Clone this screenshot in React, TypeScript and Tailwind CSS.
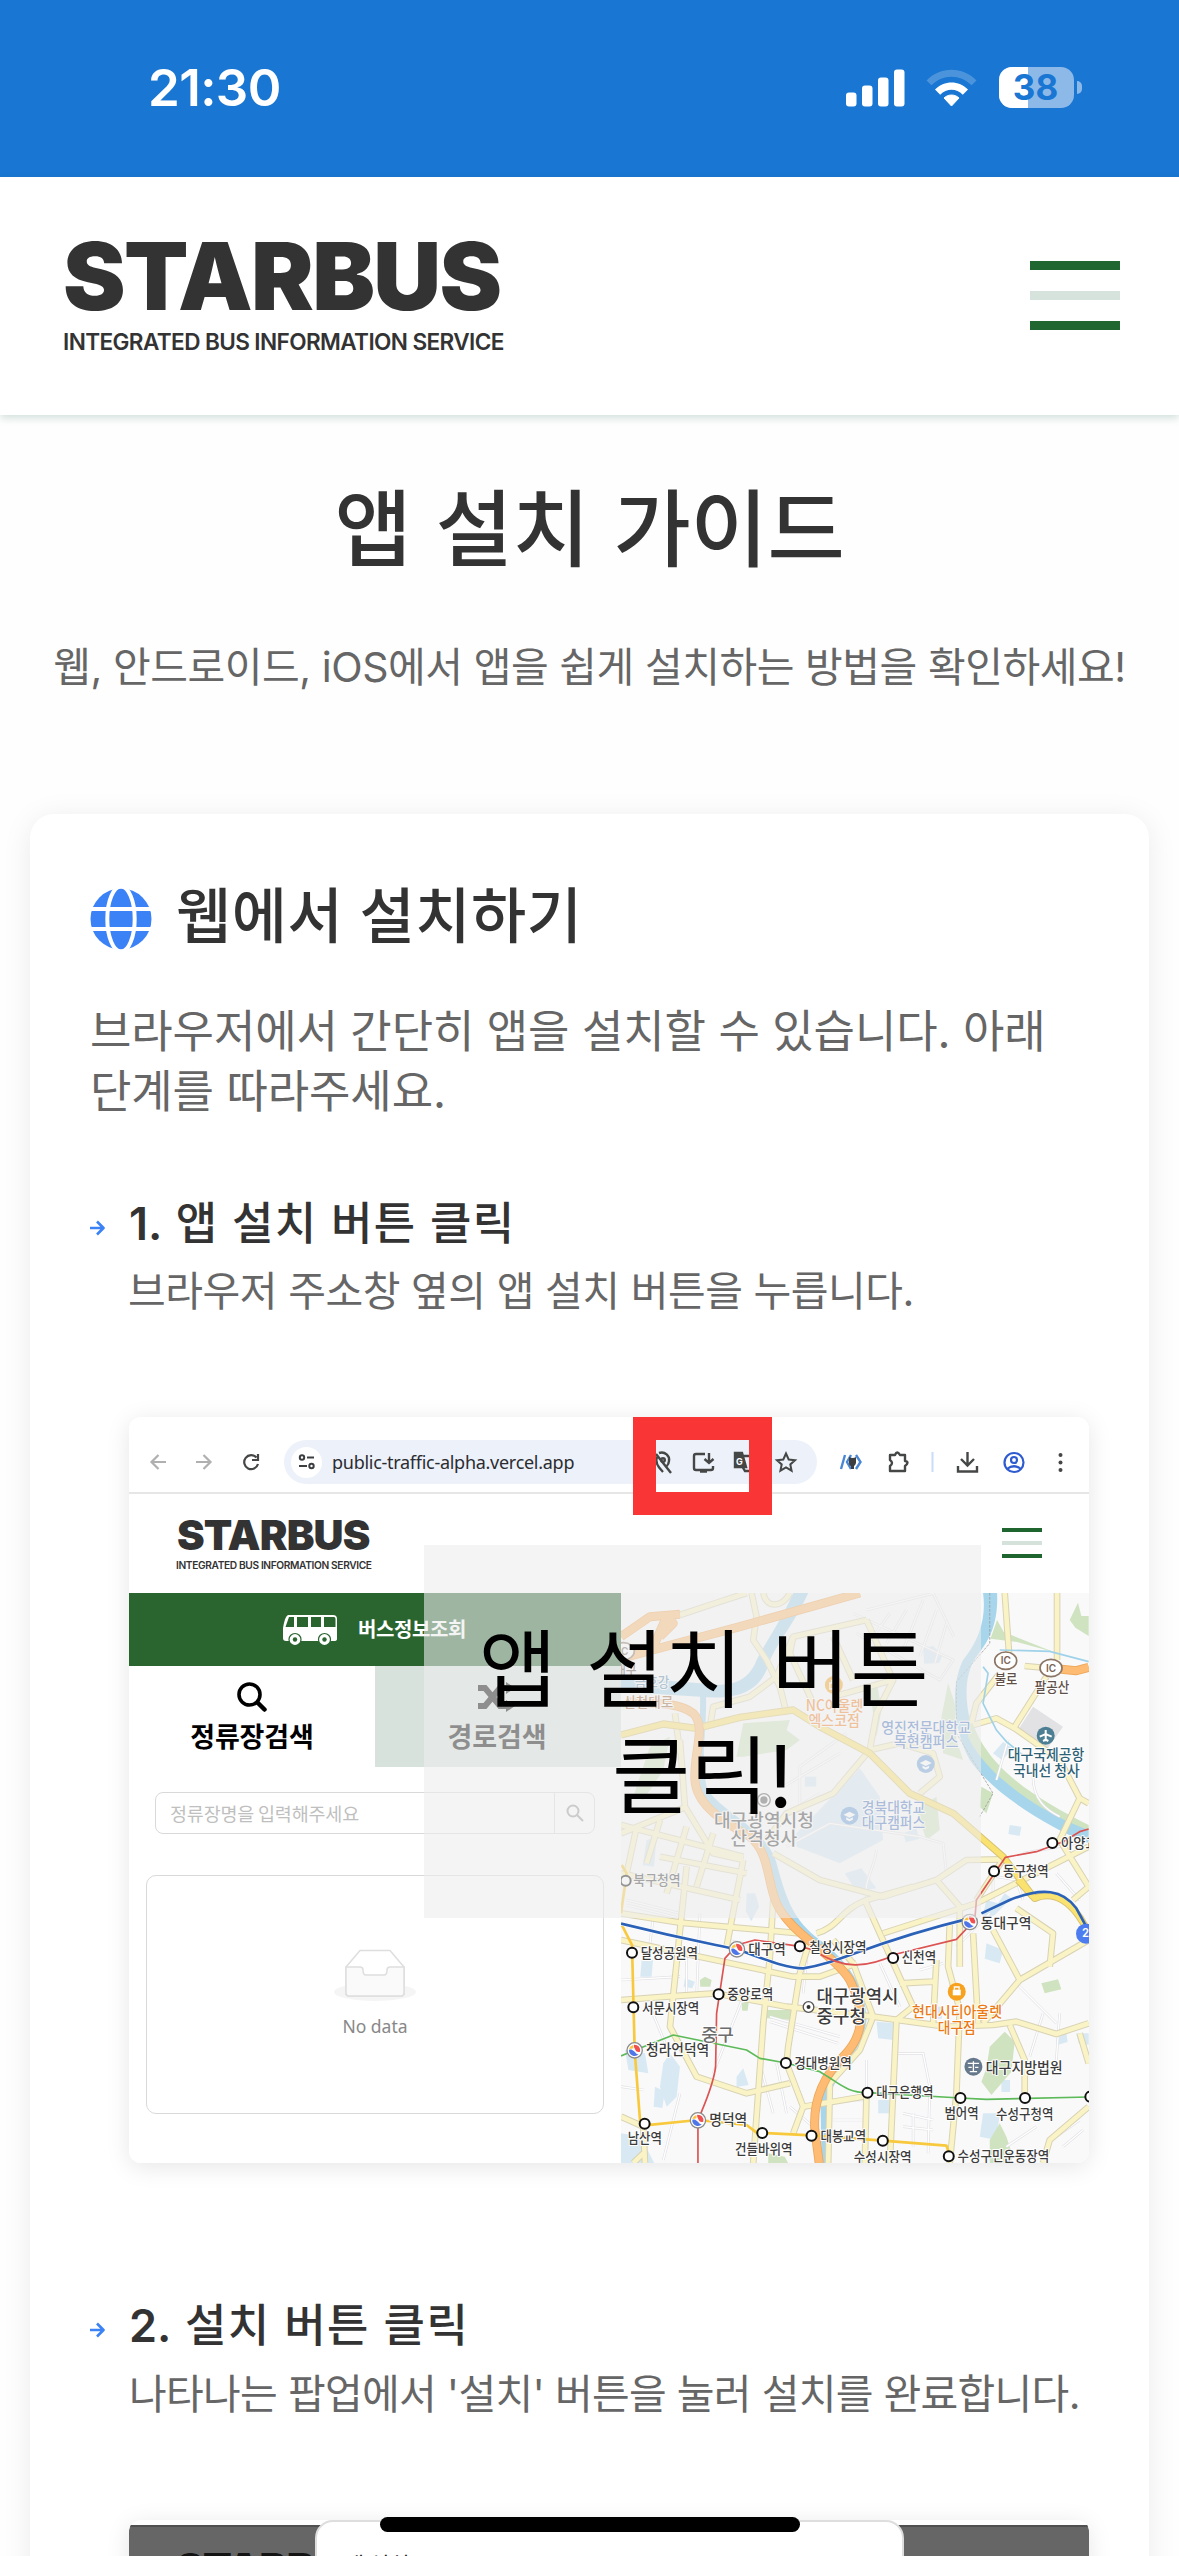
import React from "react";

const KR = "font-['Inter','Noto_Sans_CJK_KR',sans-serif]";
const MAP_FONT = "'Noto Sans CJK KR', sans-serif";

const water = [
  "M580 39 C540 130 500 180 470 240 C440 320 370 320 300 310 L63 290 L63 335 L300 350 C400 360 470 340 500 270 C520 200 580 140 625 39 Z",
  "M1150 39 L1192 39 C1196 130 1170 180 1130 230 C1080 300 1100 420 1140 500 C1200 590 1320 660 1467 750 L1467 790 C1340 740 1180 640 1110 540 C1060 450 1050 320 1090 240 C1140 180 1160 110 1150 39 Z",
  "M300 340 L318 340 C322 460 300 520 320 620 C350 690 500 740 530 850 C560 960 580 1020 660 1080 C740 1140 800 1220 800 1320 C790 1420 690 1490 682 1580 L682 1749 L665 1749 L662 1570 C680 1460 770 1400 780 1310 C780 1230 720 1160 640 1100 C560 1040 530 950 512 860 C480 760 330 720 300 620 C280 520 304 460 300 340 Z",
];

const lots = [
  "M970 205 l30 -8 l28 30 l-10 22 l-45 2 Z",
  "M780 565 L840 650 L850 780 L720 850 L590 800 L590 760 Z",
  "M615 590 h34 v30 h-34 Z",
  "M1230 735 l35 5 l-5 28 l-34 -6 Z",
  "M1180 520 l30 -34 l30 20 l-34 34 Z",
  "M910 760 l40 -15 l8 32 l-40 10 Z",
  "M735 880 l50 -15 l45 60 l-60 10 Z",
  "M140 780 l30 -10 l-8 90 l-34 -4 Z",
  "M440 940 l26 0 l12 40 l-24 44 l-16 -30 Z",
  "M1160 960 l35 10 l20 -30 l20 15 l-50 50 l-40 20 Z",
  "M125 1140 l34 0 l-4 50 l-34 0 Z",
  "M255 1195 l30 10 l-8 20 l-26 -5 Z",
  "M190 1450 l20 -30 l30 40 l-10 90 l-30 30 l-20 -60 Z",
  "M410 1490 l20 -25 l16 50 l-36 6 Z",
  "M75 1410 l60 10 l10 60 l-60 -10 Z",
  "M165 1520 l30 14 l-8 50 l-26 -4 Z",
  "M63 1660 l60 10 l40 80 l-100 0 Z",
  "M835 1560 h34 v40 h-34 Z",
  "M1150 1600 l50 0 l-10 80 l-50 -10 Z",
  "M1370 1375 l30 -15 l4 26 l-34 10 Z",
  "M1000 1280 l30 0 l-4 36 l-30 0 Z",
  "M830 1325 l55 5 l-5 50 l-45 -5 Z",
  "M1160 1090 l50 20 l-10 40 l-45 -14 Z",
  "M1430 1360 l37 0 l0 34 l-30 -4 Z",
  "M1205 1500 h26 v36 h-26 Z",
];

const greens = [
  "M1410 120 l25 -52 l10 40 l22 0 v60 l-40 -25 Z",
  "M1192 120 l20 36 l150 60 l-110 -30 l-80 -10 Z",
  "M410 530 L430 430 L570 420 L560 450 L600 480 L560 510 L430 530 Z",
  "M1025 410 l20 -100 l20 60 l5 110 l20 60 l-60 -20 Z",
  "M1110 400 C1150 560 1300 650 1467 735 L1467 750 C1300 690 1150 570 1105 470 Z",
  "M1145 620 l35 20 l-20 60 l-20 -20 Z",
  "M150 500 l60 -30 l-20 100 l-60 90 l-30 -10 Z",
  "M950 690 l60 -40 l10 100 l-40 30 Z",
  "M830 470 l-20 -140 l20 -30 l15 90 Z",
  "M300 1200 l15 -10 l20 10 l-4 20 l-30 0 Z",
  "M1325 1210 l50 -12 l10 30 l-50 12 Z",
  "M495 1290 l90 0 l-10 30 l-80 -6 Z",
  "M1170 1400 l45 -45 l30 30 l-10 90 l-60 70 l-30 -40 l15 -40 Z",
  "M1170 1680 l30 -50 l20 40 l20 60 l-10 20 l-60 0 Z",
  "M505 1720 l50 10 l10 20 l-60 0 Z",
  "M425 1270 l22 -8 l-4 30 l-16 0 Z",
];

const thin = [
  "M760 100 L1060 240 L1020 300 L770 160",
  "M800 90 L1000 40 L1062 170",
  "M820 170 L870 100 M860 190 L920 90 M910 210 L970 60 M960 230 L1010 90 M1005 250 L1040 130",
  "M600 560 L600 680 M550 620 L720 520 M600 560 L740 460 M560 700 L660 640",
  "M560 800 L690 730 L960 770 L1030 790 L1040 880",
  "M830 810 C820 880 790 900 800 960",
  "M1300 590 C1300 660 1340 690 1380 710 M1225 480 L1190 600 M1270 820 L1430 790",
  "M1190 890 L1250 900 L1270 960 M1370 880 L1440 960 M1180 870 L1180 960",
  "M80 960 L240 1000 M80 975 L230 1012 M380 1080 L480 1100",
  "M63 1200 L240 1190 M260 1130 L260 1240 M300 1000 L290 1250 M430 1250 L340 1480",
  "M510 1310 L720 1370 M510 1325 L715 1390 M620 1140 L610 1240",
  "M800 1440 L800 1540 M880 1420 L970 1420 L990 1520 L985 1720 M910 1600 L1000 1620 M910 1640 L1000 1650",
  "M690 1560 L800 1560 M700 1620 L800 1620 M940 1600 L940 1700",
  "M1330 1300 L1290 1430 M1380 1300 L1370 1440 M1250 1210 L1370 1330",
  "M1370 1670 L1440 1620 M1390 1700 L1450 1650 M1220 1700 L1310 1640",
  "M1170 1000 L1070 1100 M840 1150 L900 1280 M960 1170 L1030 1150",
  "M480 1450 L520 1600 M530 1450 L560 1600 M570 1580 L640 1640 M240 1540 L190 1740",
  "M63 1520 L130 1530 M150 1280 L200 1400 M160 1010 L150 1090",
];

const roads = [
  "M240 105 L345 70 L440 39",
  "M455 39 L470 110 L460 180 L500 240 L540 320 L560 400",
  "M490 39 C500 90 550 80 570 39",
  "M800 120 L580 170 L570 220 L640 370 M800 120 L880 300 L700 350 M700 170 L760 300",
  "M330 440 L340 380 L450 350 L530 290 L580 170",
  "M880 300 L830 400 L810 510 L700 640 L560 700 L500 780",
  "M810 510 L900 490 L1000 520 L1020 590 L960 640",
  "M1215 39 L1228 220 M1372 39 L1372 240 M1275 258 L1340 264",
  "M1200 280 L1130 370 L1115 430",
  "M1340 290 L1245 440",
  "M1120 435 L1190 415 L1245 445 L1380 540 L1440 655 L1467 670",
  "M1440 655 L1380 780 L1467 920 L1420 960",
  "M240 480 L255 680 L340 820 L430 840 M225 400 L240 520",
  "M63 760 L260 680 M110 740 L80 880 M180 720 L140 850 M63 735 L430 830 M63 880 L420 960",
  "M180 830 L440 880 M260 740 L200 940 M340 760 L290 920 M430 840 L380 1100 M260 860 L210 1340 L290 1490 L440 1540 L570 1510",
  "M520 820 L660 900 L850 950 L1010 900 L1100 840 L1210 838",
  "M1010 900 L1080 980 L1080 1160 M1210 838 L1130 960",
  "M63 1000 L240 1028 L600 1060",
  "M63 1260 L200 1250 L345 1240 L560 1280 L820 1310 L1040 1340 L1180 1335 L1250 1325 L1370 1362 L1467 1330",
  "M520 960 L510 1130 L490 1330 L460 1749",
  "M630 1080 L600 1180 L565 1400 L560 1450 L610 1580 L580 1660",
  "M795 960 L840 1060 L940 1280 L890 1320 L870 1749",
  "M63 1080 L580 1190 L660 1190 L770 1150",
  "M650 1060 C720 1040 720 990 800 960 L940 920",
  "M700 1080 L760 1150 L820 1310 L780 1410 L690 1510 L685 1749",
  "M850 1060 L1130 970 L1467 800",
  "M1050 1030 L1045 1160 L1080 1290 L1070 1540 L1050 1749",
  "M1120 1060 L1135 1330 M900 1210 L1000 1205 M1010 1140 L1000 1330",
  "M1180 1050 L1260 1200 L1467 1080 M1260 1200 L1150 1330",
  "M1250 985 L1360 1060 L1350 1160",
  "M1230 1335 L1275 1440 L1275 1550",
  "M1440 1360 L1467 1450 M1467 1580 L1350 1680 L1330 1749",
  "M610 1580 L790 1550 M800 1540 L795 1749",
  "M63 1610 L130 1640 L135 1749 M100 1749 L130 1720",
];

const yellowRoads = [
  "M63 465 L190 432 L290 445 L420 412 L580 390 L660 440 L810 520 L930 640 L1060 700 L1210 830 L1300 950",
  "M1255 900 L1305 955 C1360 930 1420 960 1467 1060",
];

const orangeRoads = [
  "M63 235 L420 140 L780 39",
  "M63 170 L150 110 L240 103",
  "M160 200 L200 110 L220 130 L180 170",
  "M80 365 C180 370 240 370 280 400 C320 440 280 520 285 600 C290 680 380 730 450 770 C510 820 500 900 530 970 C570 1060 700 1120 750 1200 C800 1300 790 1370 730 1430 C660 1500 640 1580 645 1650 L658 1749",
  "M1385 268 L1430 272 L1467 262",
];

type Label = [number, number, number, number, string, string?];

const labels: Label[] = [
  [1210, 889, 137, 42, "동구청역"],
  [1384, 804, 110, 42, "아양교"],
  [1185, 311, 68, 42, "불로", "#5f5048"],
  [1305, 335, 104, 42, "팔공산", "#5f5048"],
  [1224, 541, 230, 46, "대구국제공항", "#2f6176"],
  [1240, 588, 200, 46, "국내선 청사", "#2f6176"],
  [618, 392, 172, 46, "NC아울렛", "#f08124"],
  [626, 437, 154, 46, "엑스코점", "#f08124"],
  [844, 458, 270, 46, "영진전문대학교", "#4674bd"],
  [882, 502, 194, 46, "목현캠퍼스", "#4674bd"],
  [786, 698, 190, 44, "경북대학교", "#4674bd"],
  [786, 744, 190, 44, "대구캠퍼스", "#4674bd"],
  [342, 740, 300, 54, "대구광역시청"],
  [392, 796, 200, 54, "산격청사"],
  [100, 916, 142, 42, "북구청역"],
  [104, 322, 104, 40, "금호강", "#5585a8"],
  [70, 382, 150, 40, "신천대로", "#9a6334"],
  [45, 286, 65, 42, "대구", "#5f5048"],
  [122, 1133, 172, 42, "달성공원역"],
  [445, 1121, 113, 42, "대구역"],
  [628, 1115, 172, 42, "칠성시장역"],
  [906, 1147, 103, 42, "신천역"],
  [1143, 1044, 152, 42, "동대구역"],
  [382, 1258, 138, 42, "중앙로역"],
  [126, 1298, 172, 42, "서문시장역"],
  [138, 1426, 190, 44, "청라언덕역"],
  [304, 1383, 98, 52, "중구", "#6d6d6d"],
  [650, 1270, 246, 54, "대구광역시"],
  [650, 1330, 148, 54, "중구청"],
  [583, 1464, 173, 42, "경대병원역"],
  [937, 1312, 270, 46, "현대시티아울렛", "#ea7a16"],
  [1014, 1360, 114, 46, "대구점", "#ea7a16"],
  [1158, 1479, 231, 44, "대구지방법원"],
  [829, 1551, 172, 42, "대구은행역"],
  [1034, 1613, 103, 42, "범어역"],
  [1189, 1616, 172, 42, "수성구청역"],
  [328, 1635, 114, 44, "명덕역"],
  [83, 1690, 103, 42, "남산역"],
  [405, 1721, 173, 42, "건들바위역"],
  [662, 1683, 137, 42, "대봉교역"],
  [762, 1745, 173, 42, "수성시장역"],
  [1073, 1744, 276, 42, "수성구민운동장역"],
];

const stations = [
  [1183, 874], [1358, 789], [77, 902], [96, 1118], [600, 1099], [880, 1134],
  [356, 1243], [100, 1282], [558, 1449], [803, 1538], [1082, 1554], [1276, 1554],
  [1472, 1550], [134, 1631], [487, 1659], [635, 1667], [849, 1682], [1047, 1729],
];

const hubs = [[411, 1108], [1110, 1026], [104, 1411], [294, 1621]];

function CityMap() {
  return (
    <svg viewBox="63 39 1405 1710" preserveAspectRatio="none" className="block h-full w-full bg-[#f9f9fa]" fill="none">
      {water.map((d) => <path key={d} d={d} fill="#a6d5ec" />)}
      {lots.map((d) => <path key={d} d={d} fill="#d8e9f4" />)}
      {greens.map((d) => <path key={d} d={d} fill="#cfe3c0" />)}
      <path d="M1300 380 L1390 440 L1340 510 L1255 450 Z" fill="#e2e2e4" />
      <g strokeLinejoin="round">
        {thin.map((d) => <path key={d} d={d} stroke="#e1e1e5" strokeWidth="8" />)}
        {thin.map((d) => <path key={"i" + d} d={d} stroke="#fff" strokeWidth="4" />)}
        {roads.map((d) => <path key={d} d={d} stroke="#d8d2b4" strokeWidth="20" />)}
        {roads.map((d) => <path key={"i" + d} d={d} stroke="#f9f3c6" strokeWidth="14" />)}
        {yellowRoads.map((d) => <path key={d} d={d} stroke="#d8c273" strokeWidth="22" />)}
        {yellowRoads.map((d) => <path key={"i" + d} d={d} stroke="#f9e26f" strokeWidth="16" />)}
        {orangeRoads.map((d) => <path key={d} d={d} stroke="#eda657" strokeWidth="27" />)}
        {orangeRoads.map((d) => <path key={"i" + d} d={d} stroke="#fdbb74" strokeWidth="22" />)}
      </g>
      <path d="M1170 39 V190 L1070 305 V460 L1180 640 L1140 710" stroke="#9c9c9c" strokeWidth="2.5" strokeDasharray="8 4" />
      <path d="M1150 260 L1165 280 L1150 370 L1190 450 L1220 485 L1275 530 M1200 210 L1350 214 L1467 245" stroke="#9fd2e8" strokeWidth="5" />
      <g strokeLinejoin="round">
        <path d="M65 855 L80 880 L63 1000 M63 1030 L96 1095 L104 1411 L120 1620 L134 1636 L294 1620 L440 1635 L470 1658 L635 1666 L849 1682 L1040 1697 L1048 1720" stroke="#f8c93c" strokeWidth="8" />
        <path d="M63 1031 C240 1075 300 1085 411 1108 C500 1140 560 1165 610 1165 C720 1150 800 1090 1110 1015" stroke="#fff" strokeWidth="12" />
        <path d="M63 1031 C240 1075 300 1085 411 1108 C500 1140 560 1165 610 1165 C720 1150 800 1090 1110 1015 M1145 1000 L1230 960 C1330 920 1390 930 1430 985 L1460 1040" stroke="#2b62b8" strokeWidth="8" />
        <path d="M1467 747 L1440 755 L1390 785 L1310 815 L1217 832 L1130 960 L1125 1020 L1070 1078 L890 1122 C800 1165 730 1170 640 1110 L600 1099 L465 1080 L411 1095 L375 1135 L350 1300 L347 1460 C340 1520 310 1580 294 1621 V1749" stroke="#dc5353" strokeWidth="5" />
        <path d="M63 1428 L104 1411 L220 1365 L440 1410 L480 1435 L558 1449 L660 1475 C720 1510 740 1538 803 1538 L1082 1554 L1160 1558 L1467 1551" stroke="#5cba58" strokeWidth="5" />
      </g>
      {stations.map(([x, y]) => (
        <circle key={x + "-" + y} cx={x} cy={y} r="15" fill="#fff" stroke="#111" strokeWidth="6" />
      ))}
      {hubs.map(([x, y]) => (
        <g key={x + "-" + y} transform={`translate(${x} ${y})`}>
          <circle r="23" fill="#fff" stroke="#8b8b8b" strokeWidth="4" />
          <path d="M-2 -17 A17 17 0 0 1 16 4 C10 6 4 4 2 -2 C0 -8 -4 -10 -2 -17 Z" fill="#f05050" />
          <path d="M-17 -1 A17 17 0 0 0 12 12 C4 12 2 4 -4 1 C-8 -1 -12 -4 -17 -1 Z" fill="#4f76e8" />
          <path d="M-5 -16 A17 17 0 0 0 -17 -4 C-12 -6 -8 -4 -4 -6 Z" fill="#ffc23c" />
        </g>
      ))}
      {[[1218, 242], [1354, 264], [70, 214]].map(([x, y]) => (
        <g key={x}>
          <ellipse cx={x} cy={y} rx="33" ry="26" fill="#fff" stroke="#8b7565" strokeWidth="5" />
          <text x={x} y={y + 11} textAnchor="middle" fontSize="30" fontFamily="Inter" fontWeight="600" fill="#7a6455">IC</text>
        </g>
      ))}
      <circle cx="1338" cy="467" r="27" fill="#4d7f94" />
      <path d="M1338 450 V484 M1320 470 L1338 462 L1356 470 M1330 483 L1338 479 L1346 483" stroke="#fff" strokeWidth="6" />
      <circle cx="702" cy="315" r="27" fill="#f6a21e" />
      <path d="M690 309 h24 v18 h-24 Z M696 309 v-8 h12 v8" stroke="#fff" strokeWidth="4" />
      <circle cx="1071" cy="1235" r="27" fill="#f6a21e" />
      <path d="M1059 1229 h24 v17 h-24 Z" fill="#fff" />
      <path d="M1064 1229 v-8 h14 v8" stroke="#fff" strokeWidth="4" />
      {[[978, 552], [749, 707]].map(([x, y]) => (
        <g key={x} transform={`translate(${x} ${y})`}>
          <circle r="27" fill="#6d9fd8" />
          <path d="M-18 -3 L0 -12 L18 -3 L0 6 Z M-10 5 L0 10 L10 5 V12 L0 17 L-10 12 Z" fill="#fff" />
        </g>
      ))}
      <circle cx="1121" cy="1460" r="27" fill="#66798c" />
      <path d="M1104 1450 h34 M1121 1444 v30 M1110 1475 h22 M1106 1462 h10 M1126 1462 h10" stroke="#fff" strokeWidth="4" />
      <circle cx="492" cy="660" r="19" fill="#fff" stroke="#555" strokeWidth="4" />
      <circle cx="492" cy="660" r="11" fill="#555" />
      <circle cx="626" cy="1281" r="16" fill="#fff" stroke="#555" strokeWidth="4" />
      <circle cx="626" cy="1281" r="6" fill="#333" />
      {labels.map(([x, y, w, size, text, color]) => (
        <text
          key={text + y}
          x={x}
          y={y}
          textLength={w}
          lengthAdjust="spacingAndGlyphs"
          fontSize={size}
          fontFamily={MAP_FONT}
          fontWeight="500"
          fill={color ?? "#3c3c3c"}
          stroke="#fff"
          strokeWidth="6"
          strokeLinejoin="round"
          paintOrder="stroke"
        >
          {text}
        </text>
      ))}
      <circle cx="1459" cy="1061" r="30" fill="#4c7cf0" />
      <text x="1447" y="1072" fontSize="34" fontFamily="Inter" fontWeight="600" fill="#fff">2</text>
    </svg>
  );
}

function Logo({ small = false }: { small?: boolean }) {
  return small ? (
    <div className="flex flex-col font-['Inter',sans-serif] whitespace-nowrap text-[#333]">
      <span className="ml-px text-[41.6px] leading-[42px] font-black tracking-[-0.9px]">STARBUS</span>
      <span className="mt-[3px] text-[10.2px] leading-[12px] font-semibold tracking-[-0.37px]">INTEGRATED BUS INFORMATION SERVICE</span>
    </div>
  ) : (
    <div className="flex flex-col font-['Inter',sans-serif] whitespace-nowrap text-[#333]">
      <span className="text-[94px] leading-[96px] font-black tracking-[-1.7px]">STARBUS</span>
      <span className="mt-[2px] text-[22.6px] leading-[32px] font-semibold tracking-[-0.62px]">INTEGRATED BUS INFORMATION SERVICE</span>
    </div>
  );
}

function StatusBar() {
  return (
    <div className="flex h-[177px] items-center justify-between bg-[#1976d2] pr-[97px] pb-[2px] pl-[148px]">
      <span className="font-['Inter',sans-serif] text-[51px] leading-[60px] font-semibold tracking-[-0.6px] text-white">21:30</span>
      <div className="flex items-center">
        <svg width="59" height="38" viewBox="0 0 59 38" fill="#fff">
          <rect x="0" y="23.5" width="10.5" height="14" rx="3" />
          <rect x="16" y="16.5" width="10.5" height="21" rx="3" />
          <rect x="32" y="8.5" width="10.5" height="29" rx="3" />
          <rect x="48" y="0.5" width="10.5" height="37" rx="3" />
        </svg>
        <svg width="51" height="38" viewBox="0 0 51 38" className="ml-[21px]">
          <path d="M0.5 11.5 C14 -3 37 -3 50.500 11.500 L45.500 16.200 C34 5 17 5 5.500 16.200 Z" fill="#fff" opacity=".22" />
          <path d="M9 20.500 C18 11 33 11 42 20.500 L36.800 25.800 C30.500 19 20.500 19 14.200 25.800 Z" fill="#fff" />
          <path d="M18 29 C22 25 29 25 33 29 L25.500 37 Z" fill="#fff" stroke="#fff" strokeWidth="1" strokeLinejoin="round" />
        </svg>
        <div className="relative ml-[22px] flex h-[41px] w-[75px] overflow-hidden rounded-[13px] bg-[#8db9e9]">
          <div className="h-full w-[29px] bg-white" />
          <span className="absolute inset-x-0 top-0 pr-[2px] text-center font-['Inter',sans-serif] text-[35px] leading-[41px] font-bold text-[#1976d2]">38</span>
        </div>
        <div className="ml-[3px] h-[13px] w-[5px] rounded-r-full bg-[#8db9e9]" />
      </div>
    </div>
  );
}

function Arrow() {
  return (
    <div className="flex h-[67px] w-[39px] shrink-0 items-center">
      <svg width="15" height="16" viewBox="0 0 15 16" fill="none" stroke="#3b82f6" strokeWidth="2.6">
        <path d="M0 8 H13.500 M7 1.500 L13.500 8 L7 14.500" strokeLinejoin="round" />
      </svg>
    </div>
  );
}

function BrowserBar() {
  return (
    <div className="flex h-[77px] items-center border-b-2 border-[#e6e6e6] bg-white pt-[15px] pl-[20px]">
      <svg width="130" height="24" viewBox="0 0 130 24" fill="none" strokeWidth="2.2" className="mt-[3px]">
        <path d="M17 10 H3 M9.500 3 L2.500 10 L9.500 17 M47 10 H61 M54.500 3 L61.500 10 L54.500 17" stroke="#b0b0b0" />
        <path d="M107.500 5.500 A7 7 0 1 0 109 12 M109 2 V8 H103" stroke="#454746" />
      </svg>
      <div className="ml-[5px] flex h-[44px] w-[533px] items-center rounded-full bg-[#edf1fa]">
        <div className="ml-[7px] flex size-[31px] items-center justify-center rounded-full bg-white">
          <svg width="18" height="18" viewBox="0 0 18 18" fill="none" stroke="#3c3e40" strokeWidth="2">
            <circle cx="4" cy="4.500" r="2.200" /><circle cx="13.500" cy="13" r="2.200" />
            <path d="M9 4.500 h7 M1 13 h8" />
          </svg>
        </div>
        <span className="ml-[10px] w-[242px] font-['Noto_Sans',sans-serif] text-[18px] leading-[24px] tracking-[-0.28px] whitespace-nowrap text-[#2b2c30]">public-traffic-alpha.vercel.app</span>
        <svg width="170" height="30" viewBox="645 1447 170 30" fill="none" stroke="#454746" strokeWidth="2.4" className="ml-[71px]">
          <path d="M656 1454 L671 1473 M657 1457 C655 1461 658 1467 663 1472 M659 1453 C665 1451 670 1456 669 1461 C669 1464 667 1466 666 1467" />
          <circle cx="663" cy="1460" r="1.800" />
          <path d="M705 1454 H696 Q694 1454 694 1456 V1468 Q694 1470 696 1470 H711 Q713 1470 713 1468 V1466 M709 1453 V1463 M704.500 1459 L709 1463 L713.500 1459 M700 1471.500 h7" />
          <path d="M735 1453 h7 l4 14 h-11 Z" fill="#454746" />
          <path d="M742 1456 h9 v15 h-6 l-3 -5" />
          <path d="M786 1453.500 L788.700 1459.500 L795 1460.200 L790.300 1464.400 L791.600 1470.700 L786 1467.500 L780.400 1470.700 L781.700 1464.400 L777 1460.200 L783.300 1459.500 Z" strokeWidth="2" />
          <text x="736" y="1465" fontSize="9" fontFamily="Inter" fontWeight="700" fill="#fff" stroke="none">G</text>
        </svg>
      </div>
      <svg width="240" height="30" viewBox="835 1447 240 30" fill="none" stroke="#454746" strokeWidth="2.400" className="ml-[18px]">
        <path d="M845 1455 L841 1469 M851 1455 L847 1462 L851 1469 M856 1455 L860.500 1462 L856 1469" stroke="#4a86d6" />
        <path d="M849 1457 q4 2 7 0 v6 q-1 3 -2 3 v3 h-3 v-3 q-2 0 -2 -3 Z" fill="#3c3e40" stroke="none" />
        <path d="M890 1455 h5 q2 -5 5 0 h5 v6 q5 1 0 5 v5 h-15 v-5 q4 -3 0 -6 Z" strokeLinejoin="round" />
        <path d="M932.500 1452 v20" stroke="#c9dcf8" strokeWidth="2" />
        <path d="M967.500 1452 V1465 M961 1459 L967.500 1465.500 L974 1459 M958 1466 V1471.500 H977 V1466" />
        <g stroke="#2f5bd0" strokeWidth="2.200">
          <circle cx="1014" cy="1462.500" r="9.500" /><circle cx="1014" cy="1460" r="3" />
          <path d="M1007 1469 Q1014 1463.500 1021 1469" />
        </g>
        <g fill="#454746" stroke="none"><circle cx="1060.500" cy="1455" r="2" /><circle cx="1060.500" cy="1462.500" r="2" /><circle cx="1060.500" cy="1470" r="2" /></g>
      </svg>
    </div>
  );
}

function SearchPanel() {
  return (
    <div className="flex w-[492px] shrink-0 flex-col bg-white font-['Noto_Sans_CJK_KR',sans-serif]">
      <div className="flex h-[73px] items-center bg-[#2a6530] pl-[154px]">
        <svg width="55" height="32" viewBox="0 0 55 32">
          <path d="M5 1 H50 Q54 1 54 5 V25 Q54 27 51 27 H3 Q0 27 0 24 V14 Q2 2 5 1 Z" fill="#fff" />
          <path d="M6 3 H11 V13 H2.500 Z M14 3 H25 V13 H14 Z M28 3 H38 V13 H28 Z M41 3 H51 Q52.500 3 52.500 5 V13 H41 Z" fill="#2a6530" />
          <g fill="#fff" stroke="#2a6530" strokeWidth="1.200"><circle cx="12" cy="25.500" r="6" /><circle cx="41.500" cy="25.500" r="6" /></g>
          <circle cx="12" cy="25.500" r="2.200" fill="#2a6530" /><circle cx="41.500" cy="25.500" r="2.200" fill="#2a6530" />
        </svg>
        <span className="-mt-[2px] ml-[20px] text-[20px] leading-[28px] font-bold tracking-[-0.4px] text-white">버스정보조회</span>
      </div>
      <div className="flex h-[101px]">
        <div className="flex w-[246px] flex-col items-center pt-[16px]">
          <svg width="30" height="30" viewBox="0 0 30 30" fill="none" stroke="#000" strokeLinecap="round">
            <circle cx="12.500" cy="12.500" r="10.500" strokeWidth="3.600" /><path d="M21 21 L27.500 27.500" strokeWidth="4.500" />
          </svg>
          <span className="mt-[6px] text-[27px] leading-[36px] font-bold tracking-[-0.1px] text-black">정류장검색</span>
        </div>
        <div className="flex w-[246px] flex-col items-center bg-[#d8e2dd] pt-[16px]">
          <svg width="38" height="30" viewBox="0 0 38 30" fill="none" stroke="#000" strokeWidth="6" className="mr-[3px]">
            <path d="M0 6 H7 L22 24 H30 M0 24 H7 L22 6 H30" /><path d="M28 0 L37 6 L28 12 Z M28 18 L37 24 L28 30 Z" fill="#000" stroke="none" />
          </svg>
          <span className="mt-[6px] mr-[2px] text-[27px] leading-[36px] font-bold tracking-[-0.1px] text-black">경로검색</span>
        </div>
      </div>
      <div className="mt-[25px] ml-[26px] flex h-[42px] w-[440px] items-center rounded-[8px] border border-[#d9d9d9] pl-[14px]">
        <span className="text-[18.5px] leading-[28px] tracking-[-0.2px] text-[#bfbfbf]">정류장명을 입력해주세요</span>
        <div className="ml-auto flex h-full w-[40px] items-center justify-center border-l border-[#d9d9d9]">
          <svg width="18" height="18" viewBox="0 0 18 18" fill="none" stroke="#9a9a9a" strokeWidth="2">
            <circle cx="7" cy="7" r="5.500" /><path d="M11 11 L17 17" />
          </svg>
        </div>
      </div>
      <div className="mt-[41px] ml-[17px] flex h-[239px] w-[458px] flex-col items-center rounded-[10px] border-[1.5px] border-[#d9d9d9]">
        <svg width="82" height="53" viewBox="0 0 82 53" className="mt-[73px]" stroke="#dedede" strokeWidth="1.500">
          <ellipse cx="41" cy="43" rx="41" ry="9" fill="#f5f5f5" stroke="none" />
          <path d="M12 18 L26 1.500 H56 L70 18 V44 Q70 47 67 47 H15 Q12 47 12 44 Z" fill="#fff" />
          <path d="M12 18 H26 Q29 18 29 21 Q29 26 32 26 H50 Q53 26 53 21 Q53 18 56 18 H70 V44 Q70 47 67 47 H15 Q12 47 12 44 Z" fill="#fafafa" />
        </svg>
        <span className="mt-[10px] font-['Noto_Sans',sans-serif] text-[17.5px] leading-[28px] text-[#888]">No data</span>
      </div>
    </div>
  );
}

function InstallPreview() {
  return (
    <div className="relative mt-[96px] flex h-[746px] w-[960px] flex-col overflow-hidden rounded-[12px] bg-white shadow-[0_4px_24px_rgba(0,0,0,0.1)]">
      <BrowserBar />
      <div className="flex h-[99px] shrink-0 justify-between pt-[20px] pr-[47px] pl-[47px]">
        <Logo small />
        <div className="mt-[14px] flex w-[40px] flex-col gap-[9px]">
          <div className="h-[4px] bg-[#1f6530]" /><div className="h-[4px] bg-[#d5e2dc]" /><div className="h-[4px] bg-[#1f6530]" />
        </div>
      </div>
      <div className="flex h-[570px]">
        <SearchPanel />
        <div className="h-full w-[468px]"><CityMap /></div>
      </div>
      <div className="absolute top-0 left-[504px] h-[98px] w-[139px] border-[23px] border-[#f93535]" />
      <div className={`absolute top-[128px] left-[295px] h-[373px] w-[557px] bg-[#ededed]/60 pt-[73px] text-center text-[85px] leading-[106px] text-black ${KR}`}>
        <div className="pl-[3px] tracking-[0.5px] [word-spacing:4px]">앱 설치 버튼</div>
        <div>클릭!</div>
      </div>
    </div>
  );
}

function DialogPreview() {
  return (
    <div className="relative mt-[96px] h-[748px] w-[960px] overflow-hidden rounded-[12px] bg-white shadow-[0_4px_24px_rgba(0,0,0,0.1)]">
      <div className="mt-[5px] h-full border-t-2 border-[#505050] bg-[#666] pt-[17px] pl-[47px] font-['Inter',sans-serif] text-[42px] leading-[50px] font-black tracking-[-0.9px] text-[#141414]">STARBUS</div>
      <div className="absolute top-0 left-[186px] h-[400px] w-[589px] rounded-t-[18px] border-2 border-[#dedede] bg-white pt-[23px] pl-[27px] font-['Noto_Sans_CJK_KR',sans-serif] text-[22px] leading-[36px] text-[#222]">앱 설치</div>
    </div>
  );
}

export default function App() {
  return (
    <div className={`relative h-[2556px] w-[1179px] overflow-hidden bg-[#fefefe] ${KR}`}>
      <StatusBar />
      <header className="flex h-[238px] justify-between bg-white pt-[51px] pr-[59px] pl-[63px] shadow-[0_3px_8px_rgba(30,100,80,0.2)]">
        <Logo />
        <div className="mt-[33px] flex w-[90px] flex-col gap-[21px]">
          <div className="h-[9px] bg-[#1f6631]" /><div className="h-[9px] bg-[#d6e3dd]" /><div className="h-[9px] bg-[#1f6631]" />
        </div>
      </header>
      <h1 className="mt-[55px] h-[118px] text-center text-[84px] leading-[120px] font-medium tracking-[-0.3px] whitespace-nowrap text-[#333] [word-spacing:2px]">앱 설치 가이드</h1>
      <p className="mt-[49px] h-[60px] text-center text-[41px] leading-[60px] tracking-[-0.45px] whitespace-nowrap text-[#666]">웹, 안드로이드, iOS에서 앱을 쉽게 설치하는 방법을 확인하세요!</p>
      <section className="mx-[30px] mt-[117px] h-[1900px] rounded-[24px] bg-white px-[60px] pt-[62px] shadow-[0_4px_30px_rgba(0,0,0,0.08)]">
        <div className="flex h-[80px] items-center">
          <svg width="62" height="62" viewBox="0 0 62 62" fill="none" stroke="#fff" strokeWidth="4" className="mt-[6px]">
            <circle cx="31" cy="31" r="30.500" fill="#3b82f6" stroke="none" />
            <ellipse cx="31" cy="31" rx="13.700" ry="32.500" />
            <path d="M0 21 H62 M0 41 H62" />
          </svg>
          <h2 className="ml-[24px] text-[60px] leading-[80px] font-medium tracking-[0.5px] whitespace-nowrap text-[#333]">웹에서 설치하기</h2>
        </div>
        <p className="mt-[46px] text-[45px] leading-[60px] tracking-[-0.1px] whitespace-nowrap text-[#666]">
          브라우저에서 간단히 앱을 설치할 수 있습니다. 아래<br />단계를 따라주세요.
        </p>
        <div className="mt-[72px] flex">
          <Arrow />
          <div>
            <h3 className="h-[60px] text-[45px] leading-[60px] font-medium tracking-[1.4px] whitespace-nowrap text-[#333]"><span className="font-semibold tracking-[0px]">1.</span> 앱 설치 버튼 클릭</h3>
            <p className="mt-[7px] -ml-px h-[60px] text-[41px] leading-[60px] tracking-[-0.45px] whitespace-nowrap text-[#666]">브라우저 주소창 옆의 앱 설치 버튼을 누릅니다.</p>
            <InstallPreview />
          </div>
        </div>
        <div className="mt-[133px] flex">
          <Arrow />
          <div>
            <h3 className="h-[60px] text-[45px] leading-[60px] font-medium tracking-[1.5px] whitespace-nowrap text-[#333]"><span className="font-semibold tracking-[0px]">2.</span> 설치 버튼 클릭</h3>
            <p className="mt-[8px] h-[60px] text-[41px] leading-[60px] tracking-[-0.7px] whitespace-nowrap text-[#666]">나타나는 팝업에서 '설치' 버튼을 눌러 설치를 완료합니다.</p>
            <DialogPreview />
          </div>
        </div>
      </section>
      <div className="absolute top-[2517px] left-[380px] h-[15px] w-[420px] rounded-full bg-black" />
    </div>
  );
}
